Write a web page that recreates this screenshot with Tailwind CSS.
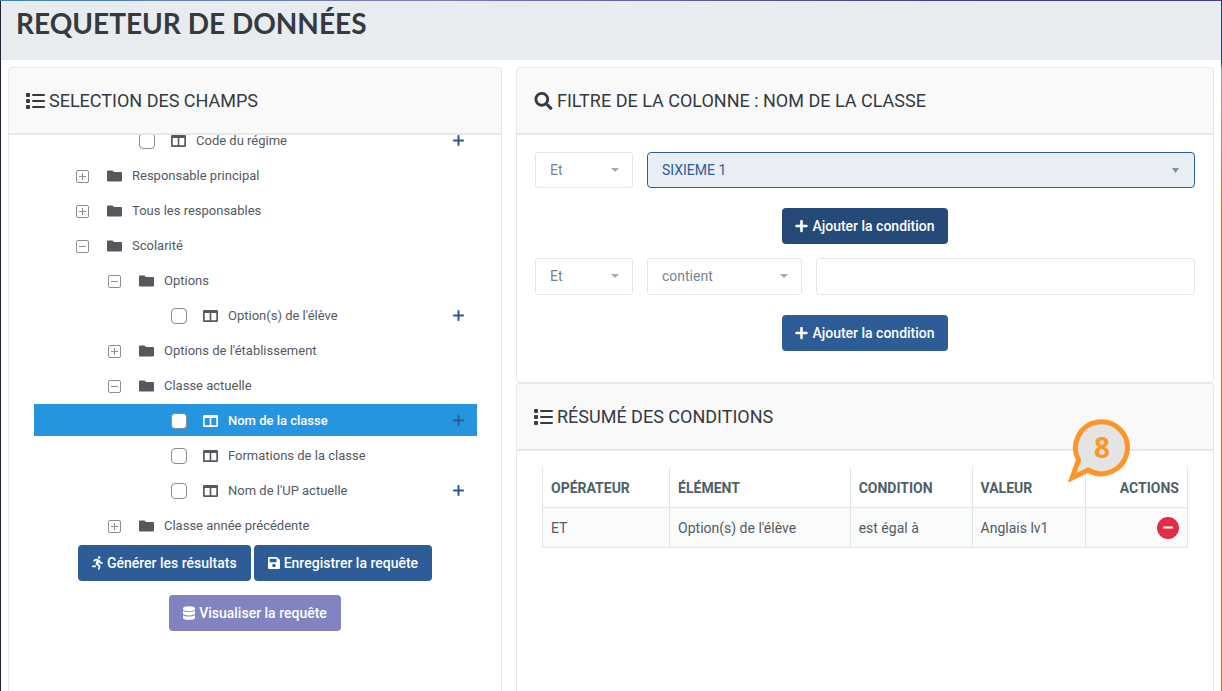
<!DOCTYPE html>
<html lang="fr">
<head>
<meta charset="utf-8">
<meta name="viewport" content="width=device-width, initial-scale=1">
<title>Requeteur de données</title>
<script src="https://cdn.jsdelivr.net/npm/@tailwindcss/browser@4"></script>
</head>
<body class="bg-white font-['Roboto',sans-serif] text-sm text-[#55595f]">
<svg class="hidden" aria-hidden="true">
  <symbol id="list" viewBox="0 0 19 16"><rect x="0" y="0" width="4" height="4" rx="1"/><rect x="0" y="6" width="4" height="4" rx="1"/><rect x="0" y="12" width="4" height="4" rx="1"/><rect x="6" y="1" width="13" height="2" rx="1"/><rect x="6" y="7" width="13" height="2" rx="1"/><rect x="6" y="13" width="13" height="2" rx="1"/></symbol>
  <symbol id="search" viewBox="0 0 512 512"><path d="M505 442.7L405.3 343c-4.5-4.5-10.6-7-17-7H372c27.6-35.3 44-79.7 44-128C416 93.1 322.9 0 208 0S0 93.1 0 208s93.1 208 208 208c48.3 0 92.7-16.4 128-44v16.3c0 6.4 2.5 12.5 7 17l99.7 99.7c9.4 9.4 24.6 9.4 33.9 0l28.3-28.3c9.4-9.4 9.4-24.6.1-34zM208 336c-70.7 0-128-57.2-128-128 0-70.7 57.2-128 128-128 70.7 0 128 57.2 128 128 0 70.7-57.2 128-128 128z"/></symbol>
  <symbol id="plus" viewBox="0 0 448 512"><path d="M416 208H272V64c0-17.67-14.33-32-32-32h-32c-17.67 0-32 14.33-32 32v144H32c-17.67 0-32 14.33-32 32v32c0 17.67 14.33 32 32 32h144v144c0 17.67 14.33 32 32 32h32c17.67 0 32-14.33 32-32V304h144c17.67 0 32-14.33 32-32v-32c0-17.67-14.33-32-32-32z"/></symbol>
  <symbol id="thinplus" viewBox="0 0 11 11"><path d="M4.500 .8q0-.8.8-.8h.4q.8 0 .8.8v3.700h3.700q.8 0 .8.8v.4q0 .8-.8.8H6.500v3.700q0 .8-.8.8h-.4q-.8 0-.8-.8V6.500H.8q-.8 0-.8-.8v-.4q0-.8.8-.8h3.700z"/></symbol>
  <symbol id="database" viewBox="0 0 448 512"><path d="M448 73.143v45.714C448 159.143 347.667 192 224 192S0 159.143 0 118.857V73.143C0 32.857 100.333 0 224 0s224 32.857 224 73.143zM448 176v102.857C448 319.143 347.667 352 224 352S0 319.143 0 278.857V176c48.125 33.143 136.208 48.572 224 48.572S399.874 209.143 448 176zm0 160v102.857C448 479.143 347.667 512 224 512S0 479.143 0 438.857V336c48.125 33.143 136.208 48.572 224 48.572S399.874 369.143 448 336z"/></symbol>
  <symbol id="save" viewBox="0 0 448 512"><path d="M433.941 129.941l-83.882-83.882A48 48 0 0 0 316.118 32H48C21.490 32 0 53.490 0 80v352c0 26.510 21.490 48 48 48h352c26.510 0 48-21.490 48-48V163.882a48 48 0 0 0-14.059-33.941zM224 416c-35.346 0-64-28.654-64-64 0-35.346 28.654-64 64-64s64 28.654 64 64c0 35.346-28.654 64-64 64zm96-304.520V212c0 6.627-5.373 12-12 12H76c-6.627 0-12-5.373-12-12V108c0-6.627 5.373-12 12-12h228.520c3.183 0 6.235 1.264 8.485 3.515l3.480 3.480A11.996 11.996 0 0 1 320 111.480z"/></symbol>
  <symbol id="run" viewBox="0 0 416 512"><path d="M272 96c26.510 0 48-21.490 48-48S298.510 0 272 0s-48 21.490-48 48 21.490 48 48 48zM113.690 317.470l-14.800 34.520H32c-17.670 0-32 14.330-32 32s14.330 32 32 32h77.450c19.250 0 36.580-11.440 44.110-29.090l8.790-20.520-10.670-6.300c-17.320-10.230-30.060-25.370-37.990-42.610zM384 223.990h-44.030l-26.060-53.250c-12.500-25.550-35.450-44.230-61.780-50.940l-71.080-21.140c-28.300-6.800-57.770-.55-80.840 17.140l-39.670 30.410c-14.030 10.750-16.690 30.830-5.920 44.860s30.840 16.660 44.860 5.920l39.690-30.410c7.670-5.890 17.440-8 25.270-6.140l14.700 4.370-37.460 87.390c-12.620 29.480-1.310 64.010 26.300 80.310l84.980 50.170-27.470 87.730c-5.280 16.860 4.110 34.820 20.970 40.090 3.190 1 6.410 1.480 9.580 1.480 13.610 0 26.230-8.770 30.520-22.450l31.640-101.060c5.910-20.770-2.890-43.080-21.640-54.390l-61.240-36.140 31.310-78.280 20.270 41.430c8 16.340 24.920 26.890 43.110 26.890H384c17.670 0 32-14.330 32-32s-14.330-31.990-32-31.990z"/></symbol>
  <symbol id="folder" viewBox="0 0 15 12"><path d="M0 1.500Q0 .5 1 .5h4.500L7 2h7q1 0 1 1v7.500q0 1-1 1H1q-1 0-1-1z"/></symbol>
  <symbol id="columns" viewBox="0 0 15 12"><path fill-rule="evenodd" d="M1.200 0h12.600Q15 0 15 1.200v9.600q0 1.200-1.200 1.200H1.200Q0 12 0 10.800V1.200Q0 0 1.200 0zM1.700 3v7.300h5V3zM8.300 3v7.300h5V3z"/></symbol>
  <symbol id="expand" viewBox="0 0 13 13"><rect x=".5" y=".5" width="12" height="12" rx="1.500" fill="none" stroke="currentColor"/><path d="M3 6.500h7M6.500 3v7" fill="none" stroke="currentColor"/></symbol>
  <symbol id="collapse" viewBox="0 0 13 13"><rect x=".5" y=".5" width="12" height="12" rx="1.500" fill="none" stroke="currentColor"/><path d="M3 6.500h7" fill="none" stroke="currentColor"/></symbol>
  <symbol id="caret" viewBox="0 0 8 4"><path d="M0 0h8L4 4z"/></symbol>
</svg>

<div class="flex h-screen min-h-[691px] flex-col overflow-hidden">
  <div class="h-px shrink-0 bg-linear-to-r from-[#3f86ab] via-[#7d7ab5] via-35% to-[#4b3585] to-80%"></div>
  <div class="flex flex-1 border-l border-[#1e2433]">
    <div class="flex min-w-0 flex-1 flex-col">
      <header class="h-[59px] bg-[#e8ecef] px-[15px] pt-1">
        <h1 class="font-['Lato',sans-serif] text-[28px] leading-9 font-bold text-[#343a40] uppercase">Requeteur de données</h1>
      </header>

      <main class="grid flex-1 grid-cols-[494fr_698fr] gap-[14px] pt-[7px] pr-[7px] pl-[7px]">
        <section class="flex flex-col rounded-t border border-b-0 border-[#e6e7e8]">
          <h2 class="flex h-[67px] shrink-0 items-center gap-1 rounded-t border-b-2 border-[#e6e7e8] bg-[#f9f9f9] px-[17px] text-lg text-[#343a40]">
            <svg class="h-4 w-[19px] fill-current"><use href="#list"/></svg>SELECTION DES CHAMPS
          </h2>
          <div class="h-[410px] shrink-0 overflow-hidden pr-6 pl-[25px]">
            <ul class="-mt-[11px] flex flex-col gap-[3px] text-[13px] leading-4">
              <li class="flex h-8 items-center pt-0.5 pr-[13px] pl-24">
                <label class="flex flex-1 items-center"><span class="flex w-8 justify-center pl-0.5"><input type="checkbox" class="size-4 appearance-none rounded-[4px] border border-[#8d8d8d] bg-white"></span><span class="flex w-[34px] justify-center pr-0.5"><svg class="h-3 w-[15px] fill-current"><use href="#columns"/></svg></span>Code du régime</label>
                <button aria-label="Ajouter Code du régime" class="pb-0.5 text-[#2c5a96]"><svg class="size-[11px] fill-current"><use href="#thinplus"/></svg></button>
              </li>
              <li class="flex h-8 items-center pt-0.5 pl-8">
                <button aria-label="Déplier" class="flex w-8 justify-center text-[#8d8d8d]"><svg class="size-[13px]"><use href="#expand"/></svg></button><span class="flex w-[34px] justify-center pr-0.5"><svg class="h-3 w-[15px] fill-current"><use href="#folder"/></svg></span>Responsable principal
              </li>
              <li class="flex h-8 items-center pt-0.5 pl-8">
                <button aria-label="Déplier" class="flex w-8 justify-center text-[#8d8d8d]"><svg class="size-[13px]"><use href="#expand"/></svg></button><span class="flex w-[34px] justify-center pr-0.5"><svg class="h-3 w-[15px] fill-current"><use href="#folder"/></svg></span>Tous les responsables
              </li>
              <li class="flex h-8 items-center pt-0.5 pl-8">
                <button aria-label="Replier" class="flex w-8 justify-center text-[#8d8d8d]"><svg class="size-[13px]"><use href="#collapse"/></svg></button><span class="flex w-[34px] justify-center pr-0.5"><svg class="h-3 w-[15px] fill-current"><use href="#folder"/></svg></span>Scolarité
              </li>
              <li class="flex h-8 items-center pt-0.5 pl-16">
                <button aria-label="Replier" class="flex w-8 justify-center text-[#8d8d8d]"><svg class="size-[13px]"><use href="#collapse"/></svg></button><span class="flex w-[34px] justify-center pr-0.5"><svg class="h-3 w-[15px] fill-current"><use href="#folder"/></svg></span>Options
              </li>
              <li class="flex h-8 items-center pt-0.5 pr-[13px] pl-32">
                <label class="flex flex-1 items-center"><span class="flex w-8 justify-center pl-0.5"><input type="checkbox" class="size-4 appearance-none rounded-[4px] border border-[#8d8d8d] bg-white"></span><span class="flex w-[34px] justify-center pr-0.5"><svg class="h-3 w-[15px] fill-current"><use href="#columns"/></svg></span>Option(s) de l'élève</label>
                <button aria-label="Ajouter Option(s) de l'élève" class="pb-0.5 text-[#2c5a96]"><svg class="size-[11px] fill-current"><use href="#thinplus"/></svg></button>
              </li>
              <li class="flex h-8 items-center pt-0.5 pl-16">
                <button aria-label="Déplier" class="flex w-8 justify-center text-[#8d8d8d]"><svg class="size-[13px]"><use href="#expand"/></svg></button><span class="flex w-[34px] justify-center pr-0.5"><svg class="h-3 w-[15px] fill-current"><use href="#folder"/></svg></span>Options de l'établissement
              </li>
              <li class="flex h-8 items-center pt-0.5 pl-16">
                <button aria-label="Replier" class="flex w-8 justify-center text-[#8d8d8d]"><svg class="size-[13px]"><use href="#collapse"/></svg></button><span class="flex w-[34px] justify-center pr-0.5"><svg class="h-3 w-[15px] fill-current"><use href="#folder"/></svg></span>Classe actuelle
              </li>
              <li class="flex h-8 items-center bg-[#2794e0] pt-0.5 pr-[13px] pl-32 font-medium text-white">
                <label class="flex flex-1 items-center"><span class="flex w-8 justify-center pl-0.5"><input type="checkbox" class="size-4 appearance-none rounded-[4px] border border-[#8d8d8d] bg-white"></span><span class="flex w-[34px] justify-center pr-0.5"><svg class="h-3 w-[15px] fill-current"><use href="#columns"/></svg></span>Nom de la classe</label>
                <button aria-label="Ajouter Nom de la classe" class="pb-0.5 text-[#2c5a96]"><svg class="size-[11px] fill-current"><use href="#thinplus"/></svg></button>
              </li>
              <li class="flex h-8 items-center pt-0.5 pr-[13px] pl-32">
                <label class="flex flex-1 items-center"><span class="flex w-8 justify-center pl-0.5"><input type="checkbox" class="size-4 appearance-none rounded-[4px] border border-[#8d8d8d] bg-white"></span><span class="flex w-[34px] justify-center pr-0.5"><svg class="h-3 w-[15px] fill-current"><use href="#columns"/></svg></span>Formations de la classe</label>
              </li>
              <li class="flex h-8 items-center pt-0.5 pr-[13px] pl-32">
                <label class="flex flex-1 items-center"><span class="flex w-8 justify-center pl-0.5"><input type="checkbox" class="size-4 appearance-none rounded-[4px] border border-[#8d8d8d] bg-white"></span><span class="flex w-[34px] justify-center pr-0.5"><svg class="h-3 w-[15px] fill-current"><use href="#columns"/></svg></span>Nom de l'UP actuelle</label>
                <button aria-label="Ajouter Nom de l'UP actuelle" class="pb-0.5 text-[#2c5a96]"><svg class="size-[11px] fill-current"><use href="#thinplus"/></svg></button>
              </li>
              <li class="flex h-8 items-center pt-0.5 pl-16">
                <button aria-label="Déplier" class="flex w-8 justify-center text-[#8d8d8d]"><svg class="size-[13px]"><use href="#expand"/></svg></button><span class="flex w-[34px] justify-center pr-0.5"><svg class="h-3 w-[15px] fill-current"><use href="#folder"/></svg></span>Classe année précédente
              </li>
            </ul>
          </div>
          <div class="flex flex-wrap justify-center gap-x-[3px] gap-y-[14px] px-8 font-medium text-white">
            <button class="flex h-9 items-center gap-1 rounded bg-[#2d5c97] px-[14px]"><svg class="h-[14px] w-[11px] fill-current"><use href="#run"/></svg>Générer les résultats</button>
            <button class="flex h-9 items-center gap-1 rounded bg-[#2d5c97] px-[14px]"><svg class="h-[14px] w-3 fill-current"><use href="#save"/></svg>Enregistrer la requête</button>
            <button class="flex h-9 items-center gap-1 rounded bg-[#8283c1] px-[14px]"><svg class="h-[14px] w-3 fill-current"><use href="#database"/></svg>Visualiser la requête</button>
          </div>
        </section>

        <div class="flex flex-col">
          <section class="rounded border border-[#e6e7e8]">
            <h2 class="flex h-[67px] items-center gap-1 rounded-t border-b-2 border-[#e6e7e8] bg-[#f9f9f9] px-[17px] text-lg text-[#343a40]">
              <svg class="h-[18px] w-[19px] fill-current"><use href="#search"/></svg>FILTRE DE LA COLONNE : NOM DE LA CLASSE
            </h2>
            <form class="flex flex-col items-center px-[18px] pt-[17px] pb-[31px] text-[#768690]">
              <div class="flex w-full gap-[14px]">
                <div class="relative w-[98px]">
                  <select aria-label="Opérateur" class="h-9 w-full appearance-none rounded-[3px] border border-[#e2e7ea] bg-white px-[14px]"><option>Et</option><option>Ou</option></select>
                  <svg class="pointer-events-none absolute top-4 right-[14px] h-1 w-2 fill-[#9eabb3]"><use href="#caret"/></svg>
                </div>
                <div class="relative flex-1">
                  <select aria-label="Valeur" class="h-9 w-full appearance-none rounded-[4px] border border-[#2d5c97] bg-[#e9eef5] px-[14px] text-[#2d5c97]"><option>SIXIEME 1</option></select>
                  <svg class="pointer-events-none absolute top-4 right-4 h-[5px] w-[7px] fill-[#84919b]" viewBox="0 0 7 5"><path d="M0 0h7L3.500 5z"/></svg>
                </div>
              </div>
              <button type="button" class="mt-5 flex h-9 items-center gap-1 rounded bg-[#264a78] px-[13px] font-medium text-white"><svg class="h-[14px] w-[13px] fill-current"><use href="#plus"/></svg>Ajouter la condition</button>
              <div class="mt-[14px] flex w-full gap-[14px]">
                <div class="relative w-[98px]">
                  <select aria-label="Opérateur" class="h-[37px] w-full appearance-none rounded-[3px] border border-[#e2e7ea] bg-white px-[14px] pb-0.5"><option>Et</option><option>Ou</option></select>
                  <svg class="pointer-events-none absolute top-4 right-[14px] h-1 w-2 fill-[#9eabb3]"><use href="#caret"/></svg>
                </div>
                <div class="relative w-[155px]">
                  <select aria-label="Condition" class="h-[37px] w-full appearance-none rounded-[3px] border border-[#e2e7ea] bg-white px-[14px] pb-0.5"><option>contient</option></select>
                  <svg class="pointer-events-none absolute top-4 right-[14px] h-1 w-2 fill-[#9eabb3]"><use href="#caret"/></svg>
                </div>
                <input type="text" aria-label="Valeur de la condition" class="h-[37px] min-w-0 flex-1 rounded-[4px] border border-[#e2e7e8] px-[14px]">
              </div>
              <button type="button" class="mt-5 flex h-9 items-center gap-1 rounded bg-[#2d5c97] px-[13px] font-medium text-white"><svg class="h-[14px] w-[13px] fill-current"><use href="#plus"/></svg>Ajouter la condition</button>
            </form>
          </section>

          <section class="relative flex-1 rounded-t border border-b-0 border-[#e6e7e8]">
            <h2 class="flex h-[67px] items-center gap-1 rounded-t border-b-2 border-[#e6e7e8] bg-[#f9f9f9] px-[17px] text-lg text-[#343a40]">
              <svg class="h-4 w-[19px] fill-current"><use href="#list"/></svg>RÉSUMÉ DES CONDITIONS
            </h2>
            <div class="px-[25px] pt-4">
              <table class="w-full table-fixed border-collapse border-x border-b border-[#e0e5e8] text-left">
                <colgroup><col class="w-[19.7%]"><col class="w-[28%]"><col class="w-[18.9%]"><col class="w-[17.6%]"><col></colgroup>
                <thead>
                  <tr class="h-10 text-[#4f5f68]">
                    <th class="border-x border-[#e0e5e8] px-2 pt-0.5 font-bold">OPÉRATEUR</th>
                    <th class="border-x border-[#e0e5e8] px-2 pt-0.5 font-bold">ÉLÉMENT</th>
                    <th class="border-x border-[#e0e5e8] px-2 pt-0.5 font-bold">CONDITION</th>
                    <th class="border-x border-[#e0e5e8] px-2 pt-0.5 font-bold">VALEUR</th>
                    <th class="border-x border-[#e0e5e8] px-2 pt-0.5 text-right font-bold">ACTIONS</th>
                  </tr>
                </thead>
                <tbody>
                  <tr class="h-10 bg-[#fafcfc]">
                    <td class="border border-[#e0e5e8] px-2 pt-0.5">ET</td>
                    <td class="border border-[#e0e5e8] px-2 pt-0.5">Option(s) de l'élève</td>
                    <td class="border border-[#e0e5e8] px-2 pt-0.5">est égal à</td>
                    <td class="border border-[#e0e5e8] px-2 pt-0.5">Anglais lv1</td>
                    <td class="border border-[#e0e5e8] px-2 pt-0.5"><button aria-label="Supprimer" class="ml-auto block"><svg class="size-[22px]" viewBox="0 0 22 22"><circle cx="11" cy="11" r="11" fill="#e12d49"/><rect x="6" y="9.500" width="10" height="2" rx=".5" fill="#fff"/></svg></button></td>
                  </tr>
                </tbody>
              </table>
            </div>
            <div class="absolute top-[33px] right-[81px] h-[65px] w-[64px]">
              <svg class="size-full" viewBox="0 0 64 65"><path d="M10.500 43A26 26 0 1 1 20 53L4 61z" fill="#e4e4e4" stroke="#ff9526" stroke-width="5"/></svg>
              <span class="absolute top-[14px] left-[6px] w-14 text-center font-['Open_Sans',sans-serif] text-[28px] leading-8 font-bold text-[#ff9526]">8</span>
            </div>
          </section>
        </div>
      </main>
    </div>
    <div class="w-px bg-linear-to-b from-[#0f4a70] from-9% via-[#9b9ca6] via-10% to-[#b5712f] to-30%"></div>
  </div>
</div>
</body>
</html>
